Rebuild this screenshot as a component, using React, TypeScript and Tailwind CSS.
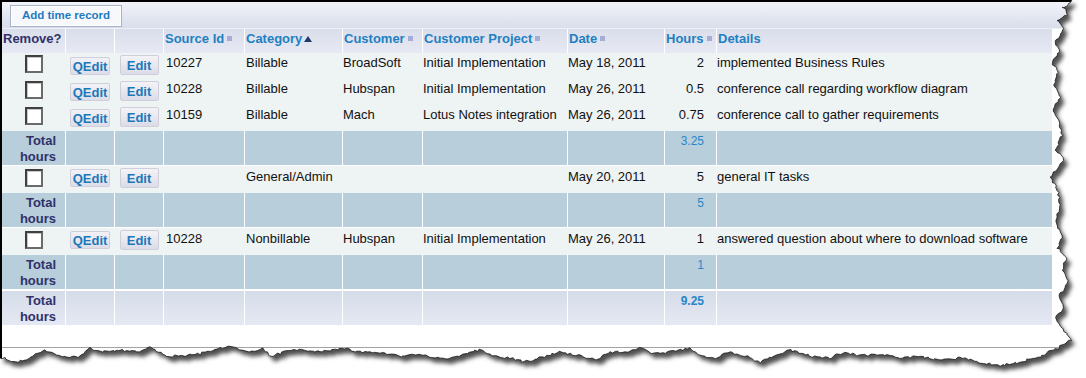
import React from "react";

type Row = {
  id: string;
  cat: string;
  cust: string;
  proj: string;
  date: string;
  hours: string;
  details: string;
};

function rng(seed: number) {
  let s = seed;
  return () => {
    s = (s * 1103515245 + 12345) & 0x7fffffff;
    return s / 0x7fffffff;
  };
}

function jag(points: [number, number][], seed: number): [number, number][] {
  const r = rng(seed);
  const out: [number, number][] = [];
  for (let i = 0; i < points.length - 1; i++) {
    const [x1, y1] = points[i];
    const [x2, y2] = points[i + 1];
    const d = Math.hypot(x2 - x1, y2 - y1);
    const n = Math.max(1, Math.round(d / 2.5));
    for (let k = 0; k < n; k++) {
      const t = k / n;
      out.push([
        x1 + (x2 - x1) * t + (r() - 0.5) * 2.4,
        y1 + (y2 - y1) * t + (r() - 0.5) * 2.4,
      ]);
    }
  }
  out.push(points[points.length - 1]);
  return out;
}

const rightEdge: [number, number][] = [
  [1072, 0], [1063, 8], [1068, 14], [1058, 20], [1064, 30], [1055, 42], [1060, 52],
  [1052, 62], [1058, 72], [1054, 85], [1060, 98], [1053, 110], [1058, 120],
  [1062, 135], [1056, 150], [1064, 160], [1054, 172], [1050, 178], [1058, 190],
  [1060, 205], [1056, 220], [1062, 235], [1058, 248], [1066, 258], [1062, 270],
  [1068, 282], [1060, 295], [1063, 310], [1056, 318], [1061, 328], [1068, 335],
  [1071, 340], [1058, 348], [1040, 356], [1020, 362], [1000, 366],
];
const bottomEdge: [number, number][] = [
  [980, 362], [960, 358], [940, 361], [920, 356], [900, 358], [880, 354], [860, 356],
  [845, 352], [830, 358], [810, 356], [790, 350], [775, 356], [760, 362], [745, 356],
  [730, 352], [715, 358], [700, 356], [690, 348], [670, 352], [655, 354], [640, 348],
  [630, 352], [610, 352], [595, 360], [580, 356], [560, 352], [540, 358], [525, 362],
  [510, 358], [495, 356], [480, 350], [470, 352], [455, 358], [440, 358], [420, 354],
  [400, 356], [380, 352], [360, 352], [345, 348], [330, 350], [315, 352], [300, 350],
  [285, 352], [270, 356], [262, 348], [250, 352], [228, 346], [215, 350], [200, 354],
  [180, 356], [165, 356], [150, 347], [140, 352], [120, 350], [100, 352], [90, 348],
  [80, 356], [70, 358], [60, 356], [45, 350], [35, 354], [25, 360], [15, 362],
  [8, 360], [2, 358], [0, 358],
];

const torn = jag([...rightEdge, ...bottomEdge], 7);
const tornStr = torn.map(([x, y]) => `${x.toFixed(1)},${y.toFixed(1)}`).join(" ");
const paperPath = `M0,0 L${tornStr} L0,358 Z`;
const outsidePath = `M-20,-20 H1106 V398 H-20 Z ${paperPath}`;

function TornEdge() {
  return (
    <svg
      className="pointer-events-none absolute left-0 top-0"
      width={1086}
      height={378}
      viewBox="0 0 1086 378"
    >
      <defs>
        <filter id="tornBlur" x="-5%" y="-5%" width="110%" height="110%">
          <feGaussianBlur stdDeviation="2.2" />
        </filter>
        <clipPath id="tornOutside">
          <path d={outsidePath} clipRule="evenodd" />
        </clipPath>
      </defs>
      <path d={outsidePath} fill="#ffffff" fillRule="evenodd" />
      <g clipPath="url(#tornOutside)">
        <path d={paperPath} transform="translate(4,5)" fill="#4f4f4f" filter="url(#tornBlur)" />
      </g>
      <polyline points={tornStr} fill="none" stroke="#1a1a1a" strokeWidth={0.8} />
    </svg>
  );
}

function SortSquare() {
  return <span className="ml-[3px] block h-[5px] w-[5px] bg-[#a7acd8]" />;
}

function SortUp() {
  return (
    <svg className="ml-[2px] block" width="8" height="6" viewBox="0 0 8 6">
      <polygon points="4,0 8,6 0,6" fill="#1c3c6c" />
    </svg>
  );
}

const rows1: Row[] = [
  { id: "10227", cat: "Billable", cust: "BroadSoft", proj: "Initial Implementation", date: "May 18, 2011", hours: "2", details: "implemented Business Rules" },
  { id: "10228", cat: "Billable", cust: "Hubspan", proj: "Initial Implementation", date: "May 26, 2011", hours: "0.5", details: "conference call regarding workflow diagram" },
  { id: "10159", cat: "Billable", cust: "Mach", proj: "Lotus Notes integration", date: "May 26, 2011", hours: "0.75", details: "conference call to gather requirements" },
];
const rows2: Row[] = [
  { id: "", cat: "General/Admin", cust: "", proj: "", date: "May 20, 2011", hours: "5", details: "general IT tasks" },
];
const rows3: Row[] = [
  { id: "10228", cat: "Nonbillable", cust: "Hubspan", proj: "Initial Implementation", date: "May 26, 2011", hours: "1", details: "answered question about where to download software" },
];

function DataRow({ r, late }: { r: Row; late: boolean }) {
  const td = `border-r border-[#eef3f3] p-0 align-top text-[13px] leading-[15px] text-[#111111] whitespace-nowrap ${
    late ? "pt-[3px]" : "pt-[2px]"
  }`;
  return (
    <tr className="bg-[#eef3f3]">
      <td className={`border-r border-[#eef3f3] p-0 align-top ${late ? "h-[27px]" : "h-[26px]"}`}>
        <div className={`flex justify-center ${late ? "pt-[3px]" : "pt-[2px]"}`}>
          <span className="block h-[18px] w-[18px] border-2 border-t-[#3f3f3f] border-l-[#3f3f3f] border-r-[#6a6a6a] border-b-[#6a6a6a] bg-white shadow-[inset_1px_1px_0_#c9c9c9]" />
        </div>
      </td>
      <td className="border-r border-[#eef3f3] p-0 align-top">
        <div className={`flex justify-center ${late ? "pt-[3px]" : "pt-[4px]"}`}>
          <span className="flex h-[18px] w-[40px] items-center justify-center rounded-[2px] border border-[#cfcfdc] bg-linear-to-b from-[#f1f1f6] to-[#dedeea] text-[13px] font-bold leading-none text-[#1b78b9]">
            QEdit
          </span>
        </div>
      </td>
      <td className="border-r border-[#eef3f3] p-0 align-top">
        <div className="flex justify-center pt-[2px]">
          <span className="flex h-[20px] w-[39px] items-center justify-center rounded-[2px] border border-[#cfcfdc] bg-linear-to-b from-[#f3f3f7] to-[#dcdce8] pt-[1px] text-[13px] font-bold leading-none text-[#1b78b9]">
            Edit
          </span>
        </div>
      </td>
      <td className={`${td} pl-[2px]`}>{r.id}</td>
      <td className={`${td} pl-[1px]`}>{r.cat}</td>
      <td className={td}>{r.cust}</td>
      <td className={td}>{r.proj}</td>
      <td className={td}>{r.date}</td>
      <td className={`${td} pr-[12px] text-right`}>{r.hours}</td>
      <td className={td}>{r.details}</td>
    </tr>
  );
}

function TotalRow({ value, grand }: { value: string; grand?: boolean }) {
  const bg = grand ? "bg-linear-to-b from-[#d5dbe9] to-[#e5e9f3]" : "bg-[#b8cfdb]";
  const cell = `border-r border-white p-0 ${grand ? "border-t" : "border-b"}`;
  return (
    <tr className={bg}>
      <td className={`${cell} h-[34px] pr-[9px] pt-[2px] text-right align-top text-[13px] font-bold leading-[16px] text-[#31316a]`}>
        Total
        <br />
        hours
      </td>
      <td className={cell} />
      <td className={cell} />
      <td className={cell} />
      <td className={cell} />
      <td className={cell} />
      <td className={cell} />
      <td className={cell} />
      <td
        className={`${cell} ${grand ? "font-bold" : ""} pr-[12px] pt-[3px] text-right align-top text-[12px] leading-[15px] text-[#2a86c7]`}
      >
        {value}
      </td>
      <td className={`p-0 border-white ${grand ? "border-t" : "border-b"}`} />
    </tr>
  );
}

function Th({ children, last }: { children: React.ReactNode; last?: boolean }) {
  return (
    <th
      className={`${last ? "" : "border-r border-white"} p-0 pl-[1px] pt-[2px] text-left align-top text-[13px] font-bold leading-[15px] text-[#1f80c2]`}
    >
      <span className="flex items-center whitespace-nowrap">{children}</span>
    </th>
  );
}

export default function App() {
  return (
    <div className="relative h-[378px] w-[1086px] overflow-hidden bg-white font-['Liberation_Sans',Arial,sans-serif]">
      <div className="flex h-[378px] w-[1086px] flex-col border-l-2 border-t-2 border-black bg-white">
        <div className="h-[26px] bg-linear-to-b from-[#f1f3f9] to-[#d9deeb] pl-[8px] pt-[3px]">
          <button className="flex h-[22px] w-[112px] items-center justify-center border border-[#a9b3c6] bg-[#f6f8fb] text-[11.5px] font-bold text-[#1f7bbf] shadow-[inset_0_0_0_1px_#ffffff]">
            Add time record
          </button>
        </div>
        <div className="h-[1px] bg-[#eef0f6]" />
        <table className="w-[1050px] table-fixed border-separate border-spacing-0">
          <colgroup>
            <col className="w-[64px]" />
            <col className="w-[49px]" />
            <col className="w-[49px]" />
            <col className="w-[81px]" />
            <col className="w-[98px]" />
            <col className="w-[80px]" />
            <col className="w-[145px]" />
            <col className="w-[97px]" />
            <col className="w-[52px]" />
            <col className="w-[335px]" />
          </colgroup>
          <thead>
            <tr className="bg-linear-to-b from-[#d9deea] to-[#e7eaf3]">
              <th className="h-[24px] border-r border-white p-0 pl-[1px] pt-[2px] text-left align-top text-[13px] font-bold leading-[15px] text-[#31316a]">
                Remove?
              </th>
              <th className="border-r border-white p-0" />
              <th className="border-r border-white p-0" />
              <Th>
                Source Id
                <SortSquare />
              </Th>
              <Th>
                Category
                <SortUp />
              </Th>
              <Th>
                Customer
                <SortSquare />
              </Th>
              <Th>
                Customer Project
                <SortSquare />
              </Th>
              <Th>
                Date
                <SortSquare />
              </Th>
              <Th>
                Hours
                <SortSquare />
              </Th>
              <Th last>Details</Th>
            </tr>
          </thead>
          <tbody>
            {rows1.map((r, i) => (
              <DataRow key={"a" + i} r={r} late={false} />
            ))}
            <TotalRow value="3.25" />
            {rows2.map((r, i) => (
              <DataRow key={"b" + i} r={r} late={true} />
            ))}
            <TotalRow value="5" />
            {rows3.map((r, i) => (
              <DataRow key={"c" + i} r={r} late={true} />
            ))}
            <TotalRow value="1" />
            <TotalRow value="9.25" grand />
          </tbody>
        </table>
        <div className="h-[22px]" />
        <div className="border-t border-[#a3a3a3]" />
      </div>
      <TornEdge />
    </div>
  );
}
